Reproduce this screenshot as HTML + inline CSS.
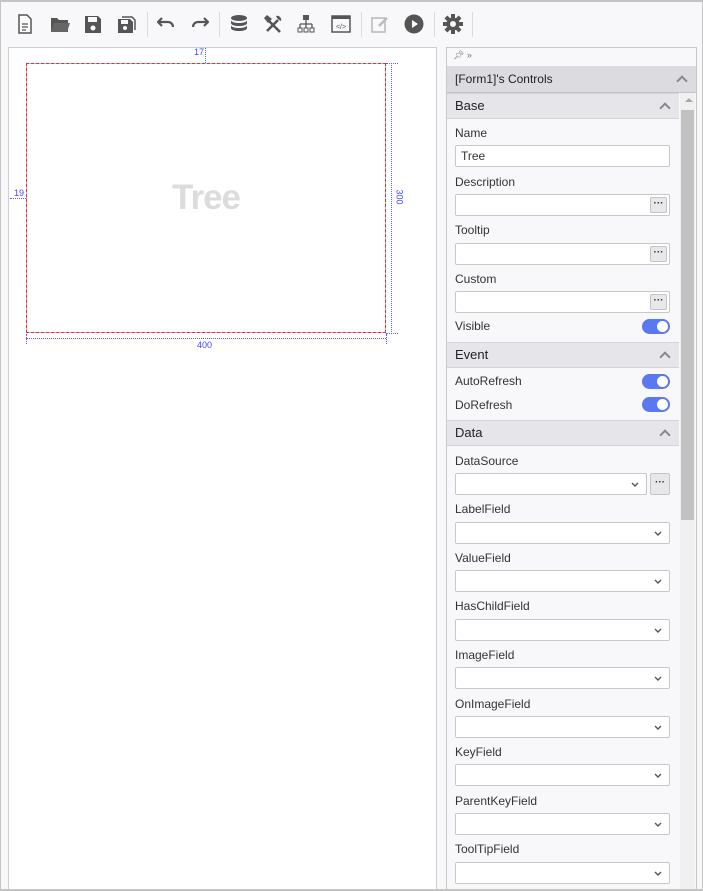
<!DOCTYPE html>
<html><head><meta charset="utf-8"><style>
*{box-sizing:border-box;margin:0;padding:0}
body{width:703px;height:891px;background:#f8f8fa;font-family:"Segoe UI","Liberation Sans",sans-serif;font-size:12px;color:#333;position:relative;overflow:hidden}
.abs{position:absolute}
.frame{left:0;top:0;width:703px;height:891px;border:1px solid #c4c4c4;border-top:2px solid #c4c4c4}
.sep{position:absolute;top:12px;width:1px;height:25px;background:#dcdcdc}
.ic{position:absolute;top:14px}
.canvas{left:8px;top:47px;width:429px;height:843px;background:#fff;border:1px solid #cfcfcf;border-bottom:none}
.panel{left:446px;top:47px;width:251px;height:843px;border:1px solid #c8c8c8;border-bottom:none;background:#f8f8fa}
.lbl{position:absolute;left:455px;font-size:12px;color:#333;margin-top:1px}
.inp{position:absolute;left:455px;width:215px;height:22px;background:#fff;border:1px solid #c8c8c8;border-radius:2px}
.btn{position:absolute;right:2px;top:2px;width:17px;height:16px;background:#e8e8ea;border:1px solid #c4c4c4;border-radius:2px;font-size:10px;font-weight:bold;line-height:11px;text-align:center;color:#333}
.chev{position:absolute;right:7px;top:8px;width:8px;height:5px}
.hdr{position:absolute;left:447px;width:232px;height:26px;background:#e6e6ea;border-top:1px solid #d4d4d8;border-bottom:1px solid #d4d4d8;font-size:13px;padding:4px 8px;color:#222}
.up{position:absolute;right:10px;top:10px;width:8px;height:8px;border-left:2px solid #888;border-top:2px solid #888;transform:rotate(45deg)}
.tog{position:absolute;left:642px;width:28px;height:15px;border-radius:8px;background:#5a78f0}
.tog:after{content:"";position:absolute;right:2px;top:2px;width:11px;height:11px;border-radius:50%;background:#fff}
</style></head><body>
<div class="abs frame"></div>
<svg class="ic" style="left:16px" width="18" height="20" viewBox="0 0 18 20"><path d="M3 1h8l4 4v14H3z" fill="#fff" stroke="#555" stroke-width="1.5"/><path d="M6 10h6M6 13h6M6 16h4" stroke="#555" stroke-width="1.2"/></svg>
<svg class="ic" style="left:50px" width="20" height="20" viewBox="0 0 20 20"><path d="M1 4h6l2 2h9v12H1z" fill="#555"/><path d="M4 9h16l-3 9H1z" fill="#666"/></svg>
<svg class="ic" style="left:84px" width="18" height="20" viewBox="0 0 18 20"><path d="M1 2h13l3 3v14H1z" fill="#555"/><rect x="4" y="3" width="9" height="5" fill="#f8f8fa"/><circle cx="9" cy="14" r="2.5" fill="#f8f8fa"/></svg>
<svg class="ic" style="left:117px" width="20" height="20" viewBox="0 0 20 20"><path d="M5 3h10l3 3v10" fill="none" stroke="#555" stroke-width="1.5"/><path d="M1 5h12l3 3v11H1z" fill="#555"/><rect x="4" y="6" width="7" height="4" fill="#f8f8fa"/><circle cx="8" cy="14" r="2" fill="#f8f8fa"/></svg>
<div class="sep" style="left:147px"></div>
<svg class="ic" style="left:157px;top:16px" width="18" height="14" viewBox="0 0 18 14"><path d="M5 2L1 6l4 4" fill="none" stroke="#555" stroke-width="2.2"/><path d="M2 6h9a5 5 0 0 1 5 5" fill="none" stroke="#555" stroke-width="2.2"/></svg>
<svg class="ic" style="left:191px;top:16px" width="18" height="14" viewBox="0 0 18 14"><path d="M13 2l4 4-4 4" fill="none" stroke="#555" stroke-width="2.2"/><path d="M16 6H7a5 5 0 0 0-5 5" fill="none" stroke="#555" stroke-width="2.2"/></svg>
<div class="sep" style="left:219px"></div>
<svg class="ic" style="left:230px" width="18" height="20" viewBox="0 0 18 20"><ellipse cx="9" cy="4" rx="8" ry="3" fill="#555"/><path d="M1 6c0 4 16 4 16 0v3c0 4-16 4-16 0zM1 11c0 4 16 4 16 0v3c0 4-16 4-16 0z" fill="#555"/></svg>
<svg class="ic" style="left:263px" width="20" height="20" viewBox="0 0 20 20"><path d="M5 6l12 12" stroke="#555" stroke-width="2.6"/><path d="M1 4l3-3 5 4-4 4z" fill="#555"/><path d="M4 17L15 6" stroke="#555" stroke-width="2.6"/><path d="M13 2a4 4 0 0 1 5 5l-2-1-2-2z" fill="#555"/></svg>
<svg class="ic" style="left:297px" width="18" height="20" viewBox="0 0 18 20"><rect x="6" y="1" width="6" height="5" fill="#555"/><path d="M9 6v4M3 10h12M3 10v4M9 10v4M15 10v4" stroke="#555" stroke-width="1.3" fill="none"/><rect x="1" y="14" width="4" height="4" fill="none" stroke="#555"/><rect x="7" y="14" width="4" height="4" fill="none" stroke="#555"/><rect x="13" y="14" width="4" height="4" fill="none" stroke="#555"/></svg>
<svg class="ic" style="left:331px" width="20" height="20" viewBox="0 0 20 20"><rect x="1" y="2" width="18" height="16" fill="none" stroke="#555" stroke-width="1.5"/><rect x="1" y="2" width="18" height="3" fill="#555"/><text x="10" y="15" font-size="7" text-anchor="middle" fill="#555" font-family="Liberation Sans">&lt;/&gt;</text></svg>
<div class="sep" style="left:361px"></div>
<svg class="ic" style="left:371px" width="18" height="20" viewBox="0 0 18 20"><rect x="1" y="4" width="13" height="14" fill="none" stroke="#bbb" stroke-width="1.6"/><path d="M8 12l8-8" stroke="#bbb" stroke-width="2.5"/></svg>
<svg class="ic" style="left:404px" width="20" height="20" viewBox="0 0 20 20"><circle cx="10" cy="10" r="9.5" fill="#555"/><path d="M8 6l6 4-6 4z" fill="#fff"/></svg>
<div class="sep" style="left:434px"></div>
<svg class="ic" style="left:443px" width="20" height="20" viewBox="0 0 20 20"><g fill="#555"><circle cx="10" cy="10" r="6.5"/><rect x="8" y="0" width="4" height="20"/><rect x="0" y="8" width="20" height="4"/><rect x="8" y="0" width="4" height="20" transform="rotate(45 10 10)"/><rect x="8" y="0" width="4" height="20" transform="rotate(-45 10 10)"/></g><circle cx="10" cy="10" r="3" fill="#f8f8fa"/></svg>
<div class="sep" style="left:472px"></div>
<div class="abs canvas"></div>
<div class="abs" style="left:26px;top:63px;width:360px;height:270px;border:1px solid rgba(100,40,80,.35)"></div>
<div class="abs" style="left:26px;top:63px;width:360px;height:270px;border:1px dashed #e03030"></div>
<div class="abs" style="left:172px;top:178px;font-size:35px;font-weight:bold;color:#dcdcdc;letter-spacing:-1px">Tree</div>
<div class="abs" style="left:205px;top:48px;height:15px;border-left:1px dotted #5a5aff"></div>
<div class="abs" style="left:194px;top:47px;font-size:9px;color:#4848ff">17</div>
<div class="abs" style="left:10px;top:198px;width:16px;border-top:1px dotted #5a5aff"></div>
<div class="abs" style="left:14px;top:188px;font-size:9px;color:#4848ff">19</div>
<div class="abs" style="left:391px;top:63px;height:271px;border-left:1px dotted #5a5aff"></div>
<div class="abs" style="left:386px;top:63px;width:12px;border-top:1px dotted #5a5aff"></div>
<div class="abs" style="left:386px;top:333px;width:12px;border-top:1px dotted #5a5aff"></div>
<div class="abs" style="left:392px;top:192px;font-size:9px;color:#4848ff;transform:rotate(90deg)">300</div>
<div class="abs" style="left:26px;top:338px;width:360px;border-top:1px dotted #5a5aff"></div>
<div class="abs" style="left:26px;top:334px;height:10px;border-left:1px dotted #5a5aff"></div>
<div class="abs" style="left:386px;top:334px;height:10px;border-left:1px dotted #5a5aff"></div>
<div class="abs" style="left:197px;top:340px;font-size:9px;color:#4848ff">400</div>
<div class="abs panel"></div>
<div class="abs" style="left:453px;top:50px;font-size:9px;color:#777">&#128204;&#xFE0E; »</div>
<div class="abs" style="left:447px;top:66px;width:249px;height:27px;background:#dcdce0;border-bottom:1px solid #c4c4c8;font-size:12px;padding:6px 8px;color:#222">[Form1]'s Controls<span class="up" style="right:10px;top:11px"></span></div>
<div class="abs" style="left:680px;top:93px;width:15px;height:797px;background:#f0f0f0"></div>
<div class="abs" style="left:685px;top:98px;border:4px solid transparent;border-bottom:4px solid #a8a8a8;border-top:none"></div>
<div class="abs" style="left:681px;top:110px;width:13px;height:410px;background:#c1c1c1"></div>
<div class="hdr" style="top:93px">Base<span class="up"></span></div>
<div class="lbl" style="top:125px">Name</div>
<div class="inp" style="top:145px;padding:3px 5px">Tree</div>
<div class="lbl" style="top:174px">Description</div>
<div class="inp" style="top:194px"><div class="btn">···</div></div>
<div class="lbl" style="top:222px">Tooltip</div>
<div class="inp" style="top:243px"><div class="btn">···</div></div>
<div class="lbl" style="top:271px">Custom</div>
<div class="inp" style="top:291px"><div class="btn">···</div></div>
<div class="lbl" style="top:318px">Visible</div>
<div class="tog" style="top:319px"></div>
<div class="hdr" style="top:342px">Event<span class="up"></span></div>
<div class="lbl" style="top:373px">AutoRefresh</div>
<div class="tog" style="top:374px"></div>
<div class="lbl" style="top:397px">DoRefresh</div>
<div class="tog" style="top:397px"></div>
<div class="hdr" style="top:420px">Data<span class="up"></span></div>
<div class="lbl" style="top:453px">DataSource</div>
<div class="inp" style="top:473px;width:192px"><svg class="chev" viewBox="0 0 8 5"><path d="M1 1l3 3 3-3" fill="none" stroke="#555" stroke-width="1.4"/></svg></div>
<div class="abs" style="left:650px;top:473px;width:20px;height:22px;background:#e8e8ea;border:1px solid #c4c4c4;border-radius:2px;font-size:10px;font-weight:bold;text-align:center;line-height:18px">···</div>
<div class="lbl" style="top:501px">LabelField</div><div class="inp" style="top:522px"><svg class="chev" viewBox="0 0 8 5"><path d="M1 1l3 3 3-3" fill="none" stroke="#555" stroke-width="1.4"/></svg></div>
<div class="lbl" style="top:550px">ValueField</div><div class="inp" style="top:570px"><svg class="chev" viewBox="0 0 8 5"><path d="M1 1l3 3 3-3" fill="none" stroke="#555" stroke-width="1.4"/></svg></div>
<div class="lbl" style="top:598px">HasChildField</div><div class="inp" style="top:619px"><svg class="chev" viewBox="0 0 8 5"><path d="M1 1l3 3 3-3" fill="none" stroke="#555" stroke-width="1.4"/></svg></div>
<div class="lbl" style="top:647px">ImageField</div><div class="inp" style="top:667px"><svg class="chev" viewBox="0 0 8 5"><path d="M1 1l3 3 3-3" fill="none" stroke="#555" stroke-width="1.4"/></svg></div>
<div class="lbl" style="top:696px">OnImageField</div><div class="inp" style="top:716px"><svg class="chev" viewBox="0 0 8 5"><path d="M1 1l3 3 3-3" fill="none" stroke="#555" stroke-width="1.4"/></svg></div>
<div class="lbl" style="top:744px">KeyField</div><div class="inp" style="top:764px"><svg class="chev" viewBox="0 0 8 5"><path d="M1 1l3 3 3-3" fill="none" stroke="#555" stroke-width="1.4"/></svg></div>
<div class="lbl" style="top:793px">ParentKeyField</div><div class="inp" style="top:813px"><svg class="chev" viewBox="0 0 8 5"><path d="M1 1l3 3 3-3" fill="none" stroke="#555" stroke-width="1.4"/></svg></div>
<div class="lbl" style="top:841px">ToolTipField</div><div class="inp" style="top:862px"><svg class="chev" viewBox="0 0 8 5"><path d="M1 1l3 3 3-3" fill="none" stroke="#555" stroke-width="1.4"/></svg></div>
<div class="abs" style="left:0;top:889px;width:703px;height:2px;background:#c4c4c4"></div>
</body></html>
